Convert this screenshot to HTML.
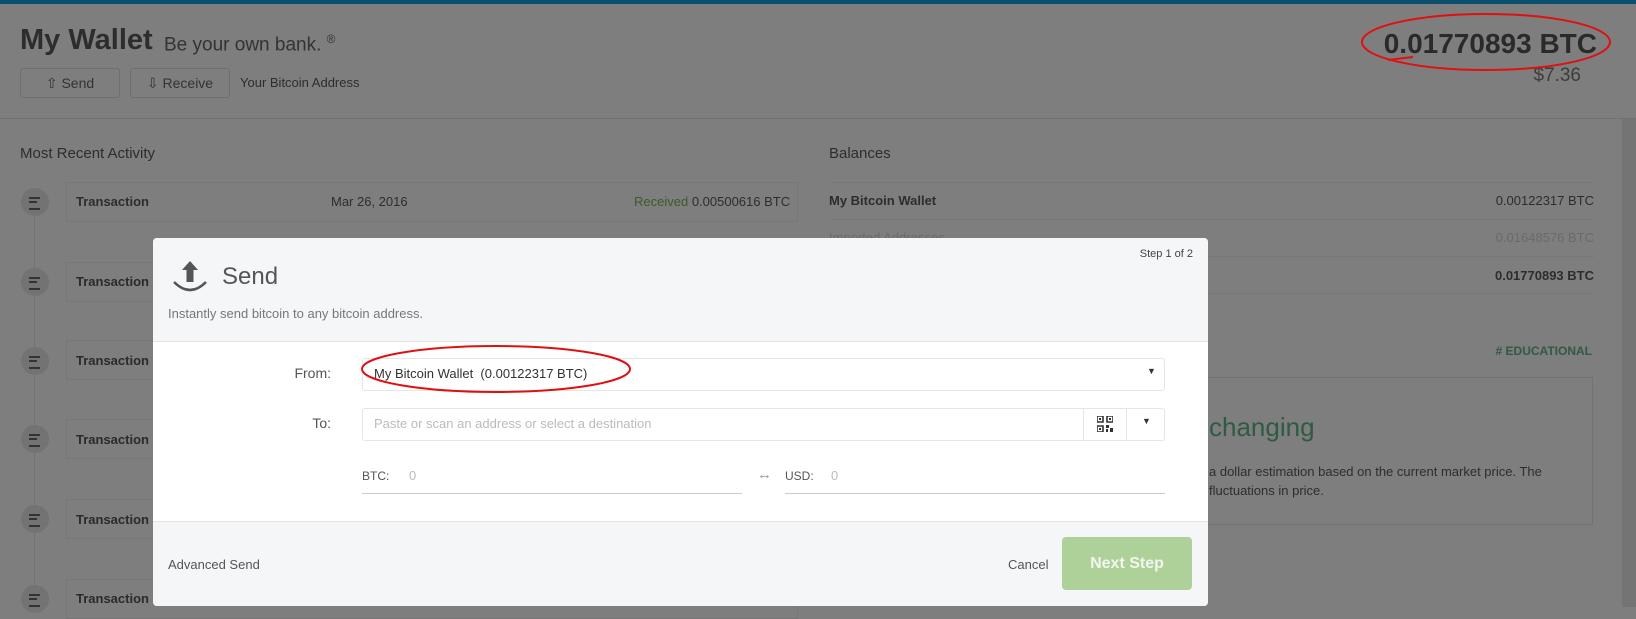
<!DOCTYPE html>
<html><head><meta charset="utf-8"><style>
*{margin:0;padding:0;box-sizing:border-box}
body{width:1636px;height:607px;overflow:hidden;background:#7e7e7e;font-family:"Liberation Sans",sans-serif;position:relative;color:#2a2a2a}
.a{position:absolute;white-space:nowrap}
.row{position:absolute;left:66px;width:732px;height:40px;border:1px solid #777}
.circ{position:absolute;left:21px;width:28px;height:28px;border-radius:50%;background:#737373}
.circ:after{content:"";position:absolute;left:8px;top:9px;width:11px;height:9px;border-top:2px solid #333;border-bottom:2px solid #333}
.circ:before{content:"";position:absolute;left:8px;top:13px;width:8px;height:2px;background:#333}
.bl{position:absolute;left:830px;width:764px;height:1px;background:#777}
.modal{position:absolute;left:153px;top:238px;width:1055px;height:368px;background:#fff;border-radius:4px;overflow:hidden}
</style></head><body>
<div class="a" style="left:0;top:0;width:1636px;height:4px;background:#0b4f6e"></div>
<div class="a" style="left:20px;top:24px;font-size:29px;font-weight:bold;color:#2d2d2d">My Wallet</div>
<div class="a" style="left:164px;top:32px;font-size:19px;color:#333">Be your own bank. <sup style="font-size:12px">®</sup></div>
<div class="a" style="left:20px;top:68px;width:100px;height:30px;border:1px solid #6f6f6f;border-radius:3px;font-size:14px;color:#333;text-align:center;line-height:28px">⇧ Send</div>
<div class="a" style="left:130px;top:68px;width:100px;height:30px;border:1px solid #6f6f6f;border-radius:3px;font-size:14px;color:#333;text-align:center;line-height:28px">⇩ Receive</div>
<div class="a" style="left:240px;top:75px;font-size:13px;color:#2d2d2d">Your Bitcoin Address</div>
<div class="a" style="right:39px;top:28px;font-size:28px;font-weight:bold;color:#2a2a2a">0.01770893 BTC</div>
<div class="a" style="right:55px;top:65px;font-size:19px;color:#3d3d3d">$7.36</div>
<div class="a" style="left:0;top:118px;width:1636px;height:1px;background:#717171"></div>
<div class="a" style="left:1622px;top:119px;width:14px;height:488px;background:#747474"></div>
<div class="a" style="left:20px;top:145px;font-size:15px;color:#2d2d2d">Most Recent Activity</div>
<div class="a" style="left:34px;top:210px;width:1px;height:400px;background:#737373"></div>
<div class="row" style="top:182px"></div>
<div class="a" style="left:76px;top:194px;font-size:13px;font-weight:bold;color:#2d2d2d">Transaction</div>
<div class="a" style="left:331px;top:194px;font-size:13px;color:#2d2d2d">Mar 26, 2016</div>
<div class="a" style="left:634px;top:194px;font-size:13px;color:#2d2d2d"><span style="color:#3d5a2a">Received</span> 0.00500616 BTC</div>
<div class="circ" style="top:188px"></div>
<div class="row" style="top:262px"></div><div class="a" style="left:76px;top:274px;font-size:13px;font-weight:bold">Transaction</div><div class="circ" style="top:268px"></div>
<div class="row" style="top:340px"></div><div class="a" style="left:76px;top:353px;font-size:13px;font-weight:bold">Transaction</div><div class="circ" style="top:347px"></div>
<div class="row" style="top:419px"></div><div class="a" style="left:76px;top:432px;font-size:13px;font-weight:bold">Transaction</div><div class="circ" style="top:425px"></div>
<div class="row" style="top:499px"></div><div class="a" style="left:76px;top:512px;font-size:13px;font-weight:bold">Transaction</div><div class="circ" style="top:505px"></div>
<div class="row" style="top:579px"></div><div class="a" style="left:76px;top:591px;font-size:13px;font-weight:bold">Transaction</div><div class="circ" style="top:585px"></div>
<div class="a" style="left:829px;top:145px;font-size:15px;color:#2d2d2d">Balances</div>
<div class="bl" style="top:182px"></div><div class="bl" style="top:219px"></div><div class="bl" style="top:256px"></div><div class="bl" style="top:293px"></div>
<div class="a" style="left:829px;top:193px;font-size:13px;font-weight:bold;color:#2d2d2d">My Bitcoin Wallet</div>
<div class="a" style="right:42px;top:193px;font-size:13px;color:#2d2d2d">0.00122317 BTC</div>
<div class="a" style="left:829px;top:230px;font-size:13px;color:#6a6a6a">Imported Addresses</div>
<div class="a" style="right:42px;top:230px;font-size:13px;color:#6a6a6a">0.01648576 BTC</div>
<div class="a" style="right:42px;top:268px;font-size:13px;font-weight:bold;color:#2d2d2d">0.01770893 BTC</div>
<div class="a" style="right:44px;top:344px;font-size:12px;font-weight:bold;color:#2f5a44">#&nbsp;EDUCATIONAL</div>
<div class="a" style="left:1100px;top:377px;width:493px;height:148px;border:1px solid #727272"></div>
<div class="a" style="left:1209px;top:412px;font-size:26px;color:#2f5a44">changing</div>
<div class="a" style="left:1209px;top:464px;font-size:13px;color:#2d2d2d">a dollar estimation based on the current market price. The</div>
<div class="a" style="left:1209px;top:483px;font-size:13px;color:#2d2d2d">fluctuations in price.</div>

<div class="modal">
 <div class="a" style="left:0;top:0;width:1055px;height:104px;background:#f5f6f8;border-bottom:1px solid #e3e3e3"></div>
 <div class="a" style="right:15px;top:10px;font-size:11px;color:#444">Step 1 of 2</div>
 <svg class="a" style="left:18px;top:22px" width="38" height="36" viewBox="0 0 38 36"><path d="M19 1 L27 10 H22.5 V22 H15.5 V10 H11 Z" fill="#555"/><path d="M3 22 Q19 38 35 22" fill="none" stroke="#555" stroke-width="2.5"/></svg>
 <div class="a" style="left:69px;top:25px;font-size:24px;color:#555">Send</div>
 <div class="a" style="left:15px;top:68px;font-size:13px;color:#777">Instantly send bitcoin to any bitcoin address.</div>
 <div class="a" style="right:877px;top:127px;font-size:14px;color:#555">From:</div>
 <div class="a" style="left:209px;top:120px;width:803px;height:33px;border:1px solid #e5e5e5;border-radius:3px"></div>
 <div class="a" style="left:221px;top:128px;font-size:13px;color:#333">My Bitcoin Wallet&nbsp; (0.00122317 BTC)</div>
 <div class="a" style="left:994px;top:128px;font-size:9px;color:#333">▼</div>
 <div class="a" style="right:877px;top:177px;font-size:14px;color:#555">To:</div>
 <div class="a" style="left:209px;top:170px;width:803px;height:33px;border:1px solid #e5e5e5;border-radius:3px"></div>
 <div class="a" style="left:930px;top:170px;width:1px;height:33px;background:#e5e5e5"></div>
 <div class="a" style="left:973px;top:170px;width:1px;height:33px;background:#e5e5e5"></div>
 <div class="a" style="left:221px;top:178px;font-size:13px;color:#bbb">Paste or scan an address or select a destination</div>
 <svg class="a" style="left:944px;top:178px" width="16" height="16" viewBox="0 0 16 16" fill="#333"><path d="M0 0h6v6H0z M10 0h6v6h-6z M0 10h6v6H0z" fill="none" stroke="#333" stroke-width="1.6"/><rect x="2" y="2" width="2" height="2"/><rect x="12" y="2" width="2" height="2"/><rect x="2" y="12" width="2" height="2"/><rect x="9" y="9" width="3" height="3"/><rect x="13" y="12" width="3" height="4"/><rect x="9" y="13" width="2" height="3"/></svg>
 <div class="a" style="left:989px;top:178px;font-size:9px;color:#333">▼</div>
 <div class="a" style="left:209px;top:231px;font-size:12px;color:#555">BTC:</div>
 <div class="a" style="left:256px;top:230px;font-size:13px;color:#bbb">0</div>
 <div class="a" style="left:209px;top:255px;width:380px;height:1px;background:#ccc"></div>
 <div class="a" style="left:604px;top:228px;font-size:15px;color:#999">↔</div>
 <div class="a" style="left:632px;top:231px;font-size:12px;color:#555">USD:</div>
 <div class="a" style="left:678px;top:230px;font-size:13px;color:#bbb">0</div>
 <div class="a" style="left:632px;top:255px;width:380px;height:1px;background:#ccc"></div>
 <div class="a" style="left:0;top:283px;width:1055px;height:85px;background:#f5f6f8;border-top:1px solid #e3e3e3"></div>
 <div class="a" style="left:15px;top:319px;font-size:13px;color:#555">Advanced Send</div>
 <div class="a" style="left:855px;top:319px;font-size:13px;color:#555">Cancel</div>
 <div class="a" style="left:909px;top:299px;width:130px;height:53px;background:#aed19a;border-radius:4px;color:#f2f7ee;font-size:16px;font-weight:bold;text-align:center;line-height:53px">Next Step</div>
</div>
<svg class="a" style="left:0;top:0" width="1636" height="607"><ellipse cx="1486" cy="42" rx="124" ry="28" fill="none" stroke="#e01010" stroke-width="2"/><path d="M1413 57 L1388 60" stroke="#e01010" stroke-width="2"/><ellipse cx="496" cy="369" rx="134" ry="23" fill="none" stroke="#e01010" stroke-width="2"/></svg>
</body></html>
